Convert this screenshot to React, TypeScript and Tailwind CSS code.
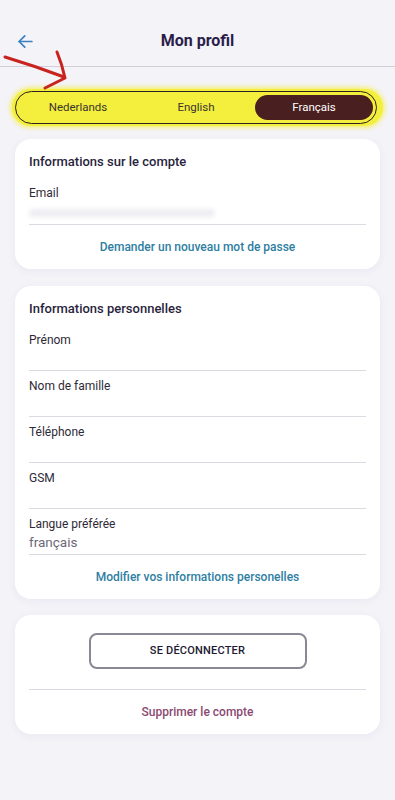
import React from 'react'

const font = { fontFamily: 'Roboto, "Noto Sans", sans-serif' }

function Field({ label, value }: { label: string; value?: string }) {
  return (
    <div className="pt-[6px] border-b border-[#dcd9e0]">
      <div className="h-[18px] text-[12px] leading-[18px] text-[#2e2a36]">{label}</div>
      <div className="h-[21px] text-[13.5px] leading-[19px] text-[#6e6976]">{value}</div>
    </div>
  )
}

function Card({ children }: { children: React.ReactNode }) {
  return (
    <div className="mx-[15px] bg-white rounded-[16px] px-[14px] shadow-[0_2px_10px_rgba(60,40,90,0.05)]">
      {children}
    </div>
  )
}

export default function App() {
  const langs = ['Nederlands', 'English', 'Français']
  const active = 'Français'

  return (
    <div style={font} className="relative min-h-[800px] w-[395px] bg-[#f4f3f8] overflow-hidden">
      {/* header */}
      <div className="h-[67px] pt-[30px] relative border-b border-[#d2cfd8]">
        <svg className="absolute left-[17px] top-[33px]" width="17" height="17" viewBox="0 0 24 24" fill="none" stroke="#3b80c2" strokeWidth="2.4" strokeLinecap="round" strokeLinejoin="round">
          <path d="M21 12H3" />
          <path d="M11 4l-8 8 8 8" />
        </svg>
        <h1 className="text-center text-[16px] leading-[22px] font-bold text-[#2b1d4a]">Mon profil</h1>
      </div>

      {/* red annotation arrow */}
      <svg className="absolute left-0 top-[48px] pointer-events-none" width="80" height="45" viewBox="0 0 80 45" fill="none" stroke="#c8231f" strokeWidth="3" strokeLinecap="round" strokeLinejoin="round">
        <path d="M5 9 Q35 18 64 29" />
        <path d="M57 4 Q62 16 65 30 Q55 35 45 40" />
      </svg>

      {/* language switch */}
      <div className="mt-[22px] mx-[12px] rounded-full bg-[#f4ef3c] py-[2px] pl-[3px] pr-[6px] shadow-[0_0_4px_2px_rgba(244,239,60,0.7)]">
        <div className="flex h-[33px] items-center rounded-full border border-[#2a2020] p-[3px]">
          {langs.map((l) => (
            <div
              key={l}
              className={
                l === active
                  ? 'flex-1 h-full rounded-full bg-[#4a1f1f] text-white flex items-center justify-center text-[11.5px]'
                  : 'flex-1 h-full flex items-center justify-center text-[11.5px] text-[#3a3330]'
              }
            >
              {l}
            </div>
          ))}
        </div>
      </div>

      {/* account card */}
      <div className="mt-[13px]">
        <Card>
          <div className="pt-[13px] h-[33px] text-[13px] leading-[20px] font-medium text-[#2a1f3d]">Informations sur le compte</div>
          <div className="pt-[12px] border-b border-[#dcd9e0]">
            <div className="h-[18px] text-[12px] leading-[18px] text-[#2e2a36]">Email</div>
            <div className="h-[22px] flex items-center">
              <div className="h-[8px] w-[186px] rounded bg-[#eeedf1] blur-[2px]" />
            </div>
          </div>
          <div className="h-[44px] flex items-center justify-center text-[12px] font-medium text-[#2e7ea2]">
            Demander un nouveau mot de passe
          </div>
        </Card>
      </div>

      {/* personal card */}
      <div className="mt-[17px]">
        <Card>
          <div className="pt-[13px] h-[39px] text-[13px] leading-[20px] font-medium text-[#2a1f3d]">Informations personnelles</div>
          <Field label="Prénom" />
          <Field label="Nom de famille" />
          <Field label="Téléphone" />
          <Field label="GSM" />
          <Field label="Langue préférée" value="français" />
          <div className="h-[44px] flex items-center justify-center text-[12px] font-medium text-[#2e7ea2]">
            Modifier vos informations personelles
          </div>
        </Card>
      </div>

      {/* logout card */}
      <div className="mt-[16px]">
        <Card>
          <div className="pt-[18px] pb-[20px] border-b border-[#dcd9e0] flex justify-center">
            <button className="w-[218px] h-[36px] rounded-[8px] border-2 border-[#8c8795] text-[11px] font-medium text-[#231a33] tracking-[0.2px]">
              SE DÉCONNECTER
            </button>
          </div>
          <div className="h-[44px] flex items-center justify-center text-[12px] font-medium text-[#8a4a72]">
            Supprimer le compte
          </div>
        </Card>
      </div>
    </div>
  )
}
